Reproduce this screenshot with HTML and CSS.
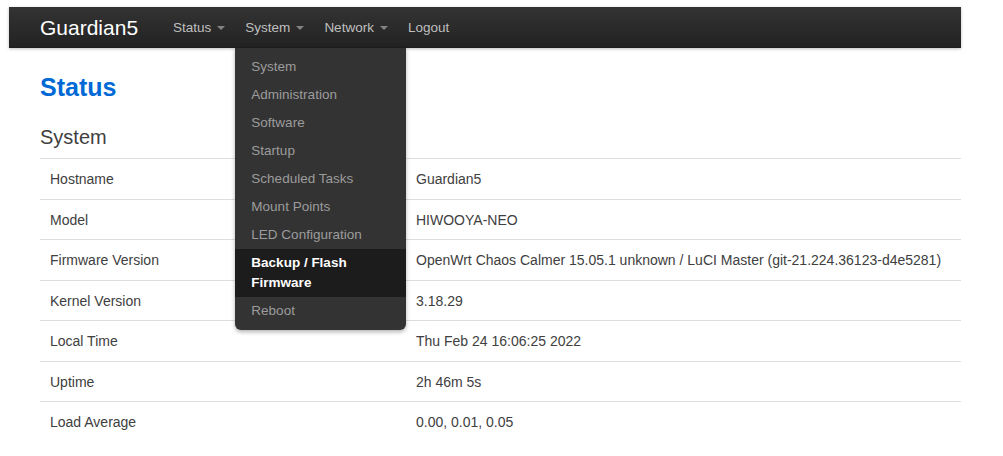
FILE: index.html
```html
<!DOCTYPE html>
<html lang="en">
  <head>
    <meta charset="UTF-8" />
    <meta name="viewport" content="width=device-width, initial-scale=1.0" />
    <title>Guardian5 - Status</title>

    <link rel="stylesheet" href="styles.css">
  </head>

  <body>
    <div class="page">
      <header class="topbar">
        <a class="brand" href="#">Guardian5</a>
        <ul class="nav">
          <li><a class="dropdown-toggle" href="#">Status</a></li>
          <li class="dropdown open">
            <a class="dropdown-toggle" href="#">System</a>
            <ul class="dropdown-menu">
              <li><a href="#">System</a></li>
              <li><a href="#">Administration</a></li>
              <li><a href="#">Software</a></li>
              <li><a href="#">Startup</a></li>
              <li><a href="#">Scheduled Tasks</a></li>
              <li><a href="#">Mount Points</a></li>
              <li><a href="#">LED Configuration</a></li>
              <li class="active"><a href="#">Backup / Flash Firmware</a></li>
              <li><a href="#">Reboot</a></li>
            </ul>
          </li>
          <li><a class="dropdown-toggle" href="#">Network</a></li>
          <li><a href="#">Logout</a></li>
        </ul>
      </header>

      <div class="content">
        <h2 class="page-title">Status</h2>
        <h3 class="section-title">System</h3>
        <table class="info-table">
          <tr><td class="label">Hostname</td><td>Guardian5</td></tr>
          <tr><td class="label">Model</td><td>HIWOOYA-NEO</td></tr>
          <tr><td class="label">Firmware Version</td><td>OpenWrt Chaos Calmer 15.05.1 unknown / LuCI Master (git-21.224.36123-d4e5281)</td></tr>
          <tr><td class="label">Kernel Version</td><td>3.18.29</td></tr>
          <tr><td class="label">Local Time</td><td>Thu Feb 24 16:06:25 2022</td></tr>
          <tr><td class="label">Uptime</td><td>2h 46m 5s</td></tr>
          <tr><td class="label">Load Average</td><td>0.00, 0.01, 0.05</td></tr>
        </table>
      </div>
    </div>
  </body>
</html>
```

FILE: styles.css
```css
body {
  margin: 0;
  padding: 0;
  background-color: #ffffff;
  font-family: "Liberation Sans", Arial, sans-serif;
  color: #404040;
}

.page {
  width: 952px;
  margin: 7px 0 0 9px;
}

.topbar {
  height: 41px;
  display: flex;
  align-items: center;
  padding-left: 31px;
  background-color: #222;
  background-image: linear-gradient(to bottom, #333333, #222222);
  box-shadow: 0 1px 3px rgba(0, 0, 0, 0.25), inset 0 -1px 0 rgba(0, 0, 0, 0.1);
  position: relative;
  z-index: 10;
}

.brand {
  color: #ffffff;
  font-size: 21px;
  text-decoration: none;
  margin-right: 25px;
}

.nav {
  display: flex;
  list-style: none;
  margin: 0;
  padding: 0;
  height: 41px;
}

.nav > li {
  position: relative;
}

.nav > li > a {
  display: flex;
  align-items: center;
  height: 41px;
  padding: 0 10px;
  color: #bfbfbf;
  font-size: 13.5px;
  text-decoration: none;
}

.dropdown-toggle::after {
  content: "";
  display: inline-block;
  margin-left: 6px;
  border-left: 4px solid transparent;
  border-right: 4px solid transparent;
  border-top: 4px solid #bfbfbf;
  opacity: 0.6;
}

.dropdown-menu {
  position: absolute;
  top: 41px;
  left: 0;
  width: 171px;
  margin: 0;
  padding: 5px 0;
  list-style: none;
  background-color: #333;
  border-radius: 0 0 6px 6px;
  box-shadow: 0 2px 4px rgba(0, 0, 0, 0.3);
}

.dropdown-menu a {
  display: block;
  padding: 4px 16px;
  line-height: 20px;
  color: #9c9c9c;
  font-size: 13.5px;
  text-decoration: none;
}

.dropdown-menu .active a {
  background-color: #1c1c1c;
  color: #ffffff;
  font-weight: bold;
}

.content {
  padding-left: 31px;
}

.page-title {
  margin: 21px 0 0;
  font-size: 25px;
  line-height: 36px;
  color: #0069d6;
}

.section-title {
  margin: 18px 0 0;
  font-size: 20px;
  font-weight: normal;
  line-height: 28px;
  color: #404040;
}

.info-table {
  width: 921px;
  margin-top: 7px;
  border-collapse: collapse;
  font-size: 14px;
}

.info-table td {
  padding: 10px 10px 9.5px;
  line-height: 20px;
  border-top: 1px solid #dddddd;
  color: #404040;
}

.info-table td.label {
  width: 346px;
}
```
